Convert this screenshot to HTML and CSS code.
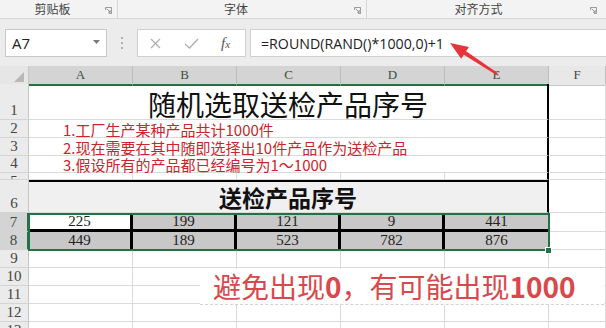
FILE: index.html
```html
<!DOCTYPE html>
<html>
<head>
<meta charset="utf-8">
<link rel="stylesheet" href="styles.css">
</head>
<body>
<div class="ribbon">
  <div class="grp g1"><span class="lbl">剪贴板</span><svg class="launch" viewBox="0 0 8 8"><path d="M0.5 3.5V0.5H7.5V7.5H4.5" fill="none" stroke="#8a8a8a" stroke-width="1"/><path d="M2 2L6 6M6 3.5V6H3.5" fill="none" stroke="#8a8a8a" stroke-width="1"/></svg></div>
  <div class="grp g2"><span class="lbl">字体</span><svg class="launch" viewBox="0 0 8 8"><path d="M0.5 3.5V0.5H7.5V7.5H4.5" fill="none" stroke="#8a8a8a" stroke-width="1"/><path d="M2 2L6 6M6 3.5V6H3.5" fill="none" stroke="#8a8a8a" stroke-width="1"/></svg></div>
  <div class="grp g3"><span class="lbl">对齐方式</span><svg class="launch last" viewBox="0 0 8 8"><path d="M0.5 3.5V0.5H7.5V7.5H4.5" fill="none" stroke="#8a8a8a" stroke-width="1"/><path d="M2 2L6 6M6 3.5V6H3.5" fill="none" stroke="#8a8a8a" stroke-width="1"/></svg></div>
</div>
<div class="fbar">
  <div class="namebox"><span>A7</span><svg class="tri" viewBox="0 0 7 4"><path d="M0 0H7L3.5 4Z" fill="#7a7a7a"/></svg></div>
  <div class="dots"><i></i><i></i><i></i></div>
  <div class="fxbox">
    <svg class="ic-x" viewBox="0 0 11 11"><path d="M1 1L10 10M10 1L1 10" stroke="#b0b0b0" stroke-width="1.3" fill="none"/></svg>
    <svg class="ic-ok" viewBox="0 0 15 11"><path d="M1 6L5.5 10L14 1" stroke="#b0b0b0" stroke-width="1.4" fill="none"/></svg>
    <span class="fx">f<span class="fxs">x</span></span>
  </div>
  <div class="formula">=ROUND(RAND()*1000,0)+1</div>
</div>
<div class="sheet">
  <div class="row hdr">
    <div class="corner"><svg class="ctri" viewBox="0 0 11 11"><path d="M11 0V11H0Z" fill="#b8b8b8"/></svg></div>
    <div class="h">A</div><div class="h">B</div><div class="h">C</div><div class="h">D</div><div class="h">E</div>
    <div class="h hf">F</div>
  </div>
  <div class="row r1"><div class="rh">1</div><div class="c span title">随机选取送检产品序号</div><div class="c"></div></div>
  <div class="row r18"><div class="rh">2</div><div class="c span note">1.工厂生产某种产品共计1000件</div><div class="c"></div></div>
  <div class="row r18"><div class="rh">3</div><div class="c span note">2.现在需要在其中随即选择出10件产品作为送检产品</div><div class="c"></div></div>
  <div class="row r4"><div class="rh">4</div><div class="c span note">3.假设所有的产品都已经编号为1～1000</div><div class="c"></div></div>
  <div class="row r5"><div class="rh top">5</div><div class="c"></div><div class="c"></div><div class="c"></div><div class="c"></div><div class="c edge"></div><div class="c"></div></div>
  <div class="row r6"><div class="rh">6</div><div class="c span band">送检产品序号</div><div class="c"></div></div>
  <div class="sel">
    <div class="row r7"><div class="rh on">7</div><div class="c v act">225</div><div class="c v">199</div><div class="c v">121</div><div class="c v">9</div><div class="c v ve">441</div><div class="c"></div></div>
    <div class="row r18 r8"><div class="rh on">8</div><div class="c v">449</div><div class="c v">189</div><div class="c v">523</div><div class="c v">782</div><div class="c v ve">876</div><div class="c"></div></div>
    <div class="selbox"></div>
    <div class="handle"></div>
  </div>
  <div class="row r18"><div class="rh">9</div><div class="c"></div><div class="c"></div><div class="c"></div><div class="c"></div><div class="c"></div><div class="c"></div></div>
  <div class="row r18"><div class="rh">10</div><div class="c"></div><div class="c"></div><div class="c"></div><div class="c"></div><div class="c"></div><div class="c"></div></div>
  <div class="row r18"><div class="rh">11</div><div class="c"></div><div class="c"></div><div class="c"></div><div class="c"></div><div class="c"></div><div class="c"></div></div>
  <div class="row r18"><div class="rh">12</div><div class="c"></div><div class="c"></div><div class="c"></div><div class="c"></div><div class="c"></div><div class="c"></div></div>
  <div class="row r18"><div class="rh">13</div><div class="c"></div><div class="c"></div><div class="c"></div><div class="c"></div><div class="c"></div><div class="c"></div></div>
</div>
<div class="anno">避免出现<b class="d">0</b>，有可能出现<b class="d">1000</b></div>
<svg class="arrow" width="606" height="328" viewBox="0 0 606 328"><polygon points="450,43 468.9,47.1 466.1,51.3 497.7,73 496.3,75 463.9,54.7 461.2,58.7" fill="#e8333a"/></svg>
</body>
</html>
```
FILE: styles.css
```css
* { box-sizing: border-box; }
body {
  margin: 0;
  width: 606px;
  height: 328px;
  overflow: hidden;
  background: #fff;
  position: relative;
  font-family: "Noto Sans CJK SC", sans-serif;
}
.ribbon {
  display: flex;
  height: 19px;
  background: #f3f3f3;
  border-bottom: 1px solid #d6d6d6;
}
.grp {
  display: flex;
  align-items: center;
  border-right: 1px solid #d6d6d6;
}
.g1 { width: 118px; }
.g2 { width: 249px; }
.g3 { flex: 1; border-right: none; }
.lbl {
  flex: 1;
  text-align: center;
  font-size: 12px;
  line-height: 18px;
  color: #444;
}
.launch { width: 7px; height: 7px; margin-right: 5px; margin-top: 3px; }
.launch.last { margin-right: 9px; }

.fbar {
  display: flex;
  align-items: center;
  height: 47px;
  padding: 10px 0 9px 5px;
  background: #ececec;
}
.namebox {
  width: 102px;
  height: 28px;
  background: #fff;
  border: 1px solid #c8c8c8;
  display: flex;
  align-items: center;
  justify-content: space-between;
  padding: 0 6px;
  font-family: "Open Sans", sans-serif;
  font-size: 15px;
  color: #222;
}
.tri { width: 7px; height: 4px; margin-top: -2px; }
.dots {
  width: 30px;
  display: flex;
  flex-direction: column;
  align-items: center;
  gap: 3px;
}
.dots i { display: block; width: 2px; height: 2px; background: #b0b0b0; }
.fxbox {
  width: 109px;
  height: 28px;
  background: #fff;
  border: 1px solid #d0d0d0;
  display: flex;
  align-items: center;
  padding-left: 12px;
}
.ic-x { width: 11px; height: 11px; }
.ic-ok { width: 15px; height: 11px; margin-left: 23px; }
.fx {
  margin-left: 22px;
  font-family: "Liberation Serif", serif;
  font-style: italic;
  font-size: 15px;
  color: #555;
}
.fxs { font-size: 11px; }
.formula {
  flex: 1;
  height: 28px;
  margin-left: 4px;
  background: #fff;
  border: 1px solid #d0d0d0;
  border-right: none;
  padding-left: 10px;
  display: flex;
  align-items: center;
  font-family: "Open Sans", sans-serif;
  font-size: 14.2px;
  color: #222;
}

.row {
  display: grid;
  grid-template-columns: 29px repeat(5, 104px) 1fr;
}
.hdr { height: 18px; }
.r1 { height: 36px; }
.r18 { height: 18px; }
.r4 { height: 17px; }
.r5 { height: 7px; }
.r6 { height: 33px; }
.r7 { height: 19px; }

.corner {
  background: #e6e6e6;
  border-right: 1px solid #c6c6c6;
  border-bottom: 1px solid #c6c6c6;
  display: flex;
  align-items: flex-end;
  justify-content: flex-end;
  padding: 0 4px 3px 0;
}
.ctri { width: 10px; height: 10px; }
.h {
  background: #d4d4d4;
  border-right: 1px solid #bdbdbd;
  border-bottom: 2px solid #217346;
  text-align: center;
  font-family: "Liberation Serif", serif;
  font-size: 13px;
  line-height: 18px;
  color: #3b4f42;
}
.hf {
  background: #e8e8e8;
  border-bottom: 1px solid #c6c6c6;
  color: #444;
}
.rh {
  background: #ebebeb;
  border-right: 1px solid #c6c6c6;
  border-bottom: 1px solid #d4d4d4;
  display: flex;
  align-items: flex-end;
  justify-content: center;
  padding-bottom: 3px;
  overflow: hidden;
  font-family: "Liberation Serif", serif;
  font-size: 15px;
  line-height: 12px;
  color: #444;
}
.rh.top { align-items: flex-start; padding: 0; line-height: 16px; }
.rh.on {
  background: #d4d4d4;
  border-right: 2px solid #217346;
  color: #3b4f42;
}
.c {
  border-right: 1px solid #dadada;
  border-bottom: 1px solid #dadada;
  min-width: 0;
}
.span { grid-column: span 5; }
.edge { border-right: 2px solid #000; }
.title {
  border-right: 2px solid #000;
  display: flex;
  align-items: center;
  justify-content: center;
  padding-top: 5px;
  font-size: 28px;
  line-height: 1;
  color: #111;
}
.note {
  border-right: 2px solid #000;
  display: flex;
  align-items: center;
  padding: 1px 0 0 34px;
  font-size: 15px;
  line-height: 15px;
  color: #c8262c;
  white-space: nowrap;
}
.band {
  background: #f0f0f0;
  border-top: 2px solid #000;
  border-right: 2px solid #000;
  display: flex;
  align-items: center;
  justify-content: center;
  font-size: 23px;
  font-weight: 700;
  line-height: 1;
  color: #111;
}
.sel { position: relative; }
.v {
  background: #c8c8c8;
  border-right: 3px solid #000;
  display: flex;
  align-items: center;
  justify-content: center;
  font-family: "Liberation Serif", serif;
  font-size: 15px;
  line-height: 1;
  color: #222;
}
.r7 .v { border-bottom: 3px solid #000; }
.v.ve { border-right: 1px solid #dadada; }
.v.act { background: #fff; }
.selbox {
  position: absolute;
  left: 28px;
  top: 0;
  width: 522px;
  bottom: -1px;
  border: 2px solid #217346;
}
.handle {
  position: absolute;
  left: 545px;
  top: 34px;
  width: 7px;
  height: 7px;
  background: #217346;
  border: 1px solid #fff;
}
.anno {
  position: absolute;
  left: 200px;
  top: 269px;
  width: 404px;
  height: 36px;
  background: #fff;
  border-bottom: 1px dashed #d2d2d2;
  padding-left: 13px;
  font-size: 28px;
  line-height: 35px;
  color: #d9484c;
  white-space: nowrap;
}
.d { font-weight: 700; }
.arrow {
  position: absolute;
  left: 0;
  top: 0;
  pointer-events: none;
}
```
